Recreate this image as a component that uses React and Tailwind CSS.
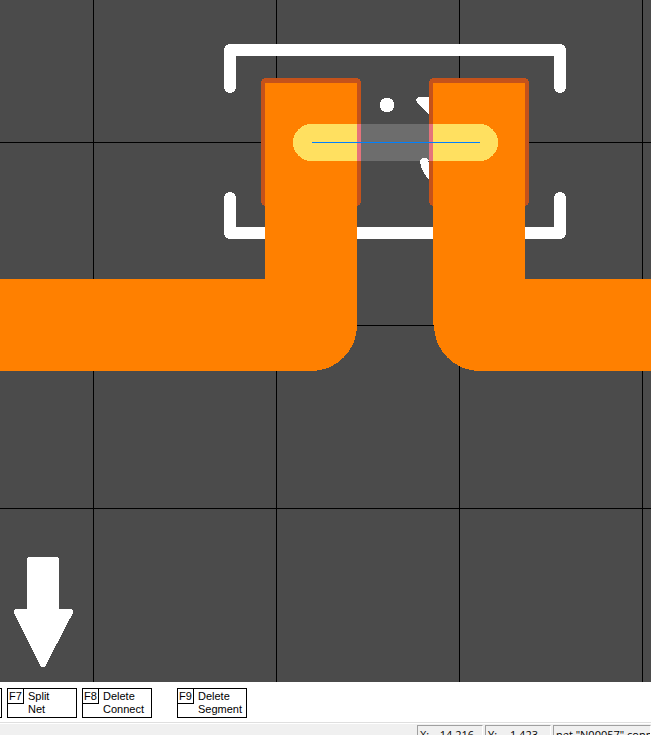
const commands = [
  { id: 'F7', lines: ['Split', 'Net'], gap: 'ml-1' },
  { id: 'F8', lines: ['Delete', 'Connect'], gap: 'ml-1' },
  { id: 'F9', lines: ['Delete', 'Segment'], gap: 'ml-6' },
];

function BoardCanvas() {
  return (
    <svg
      className="block min-h-0 w-full flex-1 bg-[#4b4b4b]"
      shapeRendering="crispEdges"
      role="img"
      aria-label="PCB layout"
    >
      {/* grid */}
      <g fill="#000">
        {[93, 276, 459, 642].map((x) => (
          <rect key={x} x={x} y="0" width="1" height="100%" />
        ))}
        {[142, 325, 508].map((y) => (
          <rect key={y} x="0" y={y} width="100%" height="1" />
        ))}
      </g>

      {/* silkscreen */}
      <g fill="none" stroke="#fff" strokeWidth="12" strokeLinecap="round" strokeLinejoin="round">
        <path d="M230 87V50H560V87" />
        <path d="M230 198V233H560V198" />
      </g>
      <circle cx="387" cy="105" r="7.3" fill="#fff" />
      <path d="M419 97H440V126L429 115L418 104Q414 99 419 97Z" fill="#fff" />
      <path
        d="M422 158H427L429 163V179Q424 175 421 167L420 161Z"
        fill="#fff"
      />
      <path
        d="M30 560H56V612H70L43 664L17 612H30Z"
        fill="#fff"
        stroke="#fff"
        strokeWidth="6"
        strokeLinejoin="round"
      />

      {/* pads */}
      <rect x="261" y="78" width="100" height="128" rx="5" fill="#c4521b" />
      <rect x="429" y="78" width="100" height="128" rx="5" fill="#c4521b" />

      {/* traces */}
      <path d="M265 83H357V325A46 46 0 0 1 311 371H0V279H265Z" fill="#ff8000" />
      <path d="M433 83H525V279H4000V371H480A46 46 0 0 1 434 325H433Z" fill="#ff8000" />

      {/* selected connection */}
      <rect x="293" y="124" width="205" height="37" rx="18.5" fill="#6d6d6d" />
      <path d="M422 158H427L429 161H420Z" fill="#fff" />
      <path d="M357 124H311.5A18.5 18.5 0 0 0 311.5 161H357Z" fill="#ffe060" />
      <path d="M433 124H479.5A18.5 18.5 0 0 1 479.5 161H433Z" fill="#ffe060" />
      <rect x="357" y="124" width="4" height="37" fill="#e5737b" />
      <rect x="429" y="124" width="4" height="37" fill="#e5737b" />
      <rect x="312" y="142" width="168" height="1" fill="#0080ff" />
    </svg>
  );
}

function CommandBar() {
  return (
    <nav className="flex h-10 shrink-0 items-start overflow-hidden bg-white pt-1.5 font-['Liberation_Sans',Arial,sans-serif] text-[11px] leading-[13px] text-black">
      <span className="h-[30px] w-0.5 border border-l-0 border-black" />
      <span className="w-px" />
      {commands.map(({ id, lines, gap }) => (
        <button
          key={id}
          type="button"
          className={`flex h-[30px] w-[70px] shrink-0 border border-black text-left ${gap} mr-px`}
        >
          <span className="h-[15px] w-4 shrink-0 border-r border-b border-black pt-px pl-px">{id}</span>
          <span className="pt-px pl-1">
            {lines.map((line) => (
              <span key={line} className="block">
                {line}
              </span>
            ))}
          </span>
        </button>
      ))}
    </nav>
  );
}

function StatusBar() {
  const cell =
    'flex h-6 shrink-0 border border-[#a0a0a0] border-r-white border-b-white pt-px whitespace-pre';
  return (
    <footer className="h-[13px] shrink-0 overflow-hidden border-t border-[#dfdfdf] bg-[#f0f0f0] font-['Open_Sans','Noto_Sans',sans-serif] text-[11px] leading-4 text-black">
      <div className="flex justify-end gap-0.5 border-t border-white pt-px">
        <div className={`${cell} w-[66px] justify-between pr-2 pl-0.5`}>
          <span>X:</span>
          <span>14.216</span>
        </div>
        <div className={`${cell} w-[66px] justify-between pr-3 pl-0.5`}>
          <span>Y:</span>
          <span>1.423</span>
        </div>
        <div className={`${cell} w-[98px] overflow-hidden pl-0.5`}>net "N00057" conn</div>
      </div>
    </footer>
  );
}

export default function App() {
  return (
    <main className="flex h-screen flex-col overflow-hidden">
      <BoardCanvas />
      <CommandBar />
      <StatusBar />
    </main>
  );
}
